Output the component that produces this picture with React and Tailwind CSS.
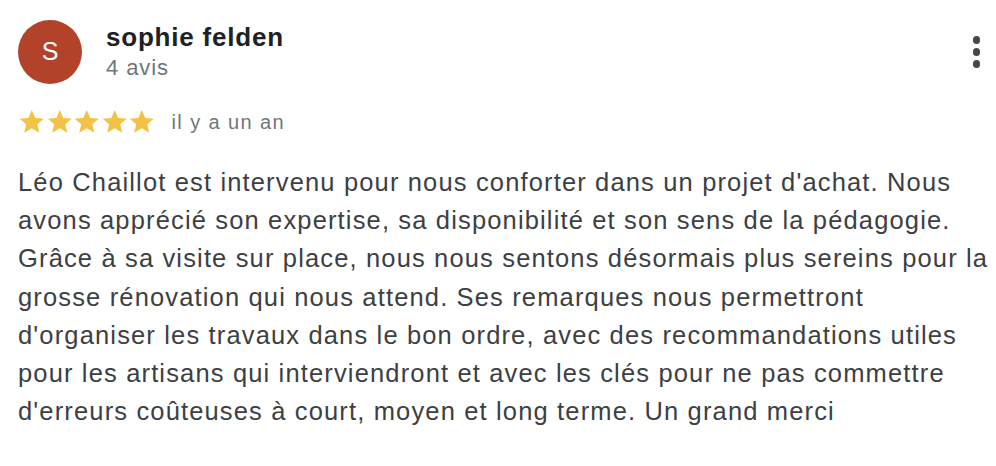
const TEXT =
  "Léo Chaillot est intervenu pour nous conforter dans un projet d'achat. Nous avons apprécié son expertise, sa disponibilité et son sens de la pédagogie. Grâce à sa visite sur place, nous nous sentons désormais plus sereins pour la grosse rénovation qui nous attend. Ses remarques nous permettront d'organiser les travaux dans le bon ordre, avec des recommandations utiles pour les artisans qui interviendront et avec les clés pour ne pas commettre d'erreurs coûteuses à court, moyen et long terme. Un grand merci";

function Star() {
  return (
    <svg viewBox="0 0 24 24" className="h-[28px] w-[27.5px]">
      <path
        fill="#f3c143"
        d="M12 1.6l3 6.9 7.5.6-5.7 4.9 1.8 7.3L12 17.4l-6.6 3.9 1.8-7.3-5.7-4.9 7.5-.6z"
      />
    </svg>
  );
}

export default function App() {
  return (
    <div className="min-h-[466px] w-[996px] bg-white font-['Liberation_Sans',Arial,sans-serif]">
      <div className="px-[18px] pt-[20px]">
        <div className="flex items-start">
          <div className="flex h-[64px] w-[64px] shrink-0 items-center justify-center rounded-full bg-[#b2432a] text-[25px] text-white">
            S
          </div>
          <div className="ml-[24px] flex-1 pt-[1px]">
            <div className="text-[26px] font-bold leading-[32px] tracking-[0.8px] text-[#202124]">sophie felden</div>
            <div className="mt-[1px] text-[22px] leading-[28px] tracking-[0.9px] text-[#70757a]">4 avis</div>
          </div>
          <div className="-mr-[2px] mt-[16px] flex flex-col gap-[4.5px]">
            <span className="block h-[7.5px] w-[7.5px] rounded-full bg-[#474747]" />
            <span className="block h-[7.5px] w-[7.5px] rounded-full bg-[#474747]" />
            <span className="block h-[7.5px] w-[7.5px] rounded-full bg-[#474747]" />
          </div>
        </div>
        <div className="mt-[24px] flex items-center">
          <div className="flex">
            <Star />
            <Star />
            <Star />
            <Star />
            <Star />
          </div>
          <span className="ml-[16px] text-[20px] leading-[28px] tracking-[1.4px] text-[#70757a]">il y a un an</span>
        </div>
        <p className="mt-[27px] -mr-[18px] text-[25.5px] leading-[38.2px] tracking-[1.15px] text-[#3c4043]">{TEXT}</p>
      </div>
    </div>
  );
}
